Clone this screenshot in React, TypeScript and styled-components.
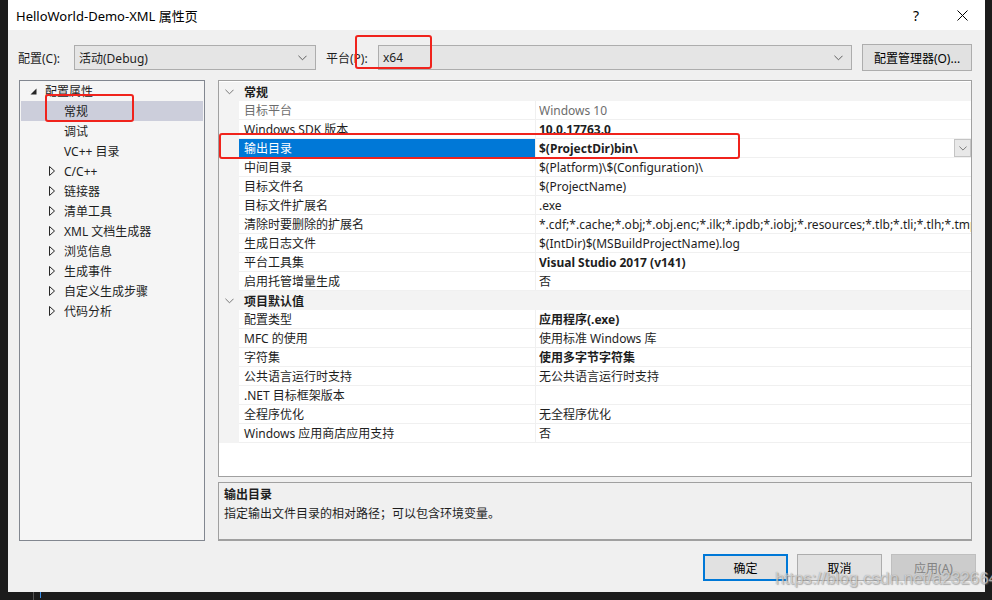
import React from "react";
import styled, { createGlobalStyle, css } from "styled-components";

const GlobalStyle = createGlobalStyle`
  html, body { margin: 0; padding: 0; background: #1c1c1c; }
  body { font-family: "Segoe UI", "Noto Sans", "Noto Sans CJK SC", sans-serif; font-size: 12px; color: #1e1e1e; }
  * { box-sizing: border-box; }
`;

const FONT = `"Segoe UI", "Noto Sans", "Noto Sans CJK SC", sans-serif`;

const Page = styled.div`
  position: relative;
  width: 992px;
  height: 600px;
  overflow: hidden;
  background: #1c1c1c;
  padding: 0 7px 0 8px;
  display: flex;
  flex-direction: column;
  font-family: ${FONT};
`;

const Dialog = styled.div`
  width: 977px;
  height: 592px;
  background: #f0f0f0;
  display: flex;
  flex-direction: column;
  overflow: hidden;
`;

const TitleBar = styled.div`
  height: 30px;
  background: #ffffff;
  display: flex;
  align-items: center;
  padding-left: 8px;
`;

const TitleText = styled.span`
  font-size: 13px;
  color: #000;
  flex: 1;
`;

const TitleButton = styled.div`
  width: 46px;
  height: 30px;
  display: flex;
  align-items: center;
  justify-content: center;
  font-size: 14px;
  color: #000;
`;

const Body = styled.div`
  flex: 1;
  min-width: 0;
  display: flex;
  flex-direction: column;
  padding: 14px 13px 11px 10px;
`;

const ConfigRow = styled.div`
  height: 27px;
  display: flex;
  align-items: center;
`;

const Label = styled.span<{ $w: number }>`
  width: ${(p) => p.$w}px;
  flex: none;
`;

const Combo = styled.div<{ $w: number }>`
  width: ${(p) => p.$w}px;
  height: 25px;
  flex: none;
  background: #e5e5e5;
  border: 1px solid #adadad;
  display: flex;
  align-items: center;
  padding: 0 8px 0 4px;
  margin-right: 10px;
  span { flex: 1; }
`;

const PushButton = styled.div<{ $variant?: "default" | "primary" | "disabled" }>`
  width: 85px;
  height: 27px;
  flex: none;
  display: flex;
  align-items: center;
  justify-content: center;
  background: #e1e1e1;
  border: 1px solid #adadad;
  color: #000;
  ${(p) =>
    p.$variant === "primary" &&
    css`
      border: 2px solid #0078d7;
    `}
  ${(p) =>
    p.$variant === "disabled" &&
    css`
      background: #cccccc;
      border-color: #bfbfbf;
      color: #838383;
    `}
`;

const WideButton = styled(PushButton)`
  width: 110px;
`;

const Main = styled.div`
  margin-top: 9px;
  margin-left: 1px;
  height: 461px;
  min-width: 0;
  display: flex;
  gap: 13px;
`;

const Tree = styled.div`
  width: 186px;
  flex: none;
  background: #f5f5f5;
  border: 1px solid #828790;
  padding: 0 1px;
`;

const TreeRow = styled.div<{ $level: number; $selected?: boolean }>`
  height: 20px;
  display: flex;
  align-items: center;
  padding-left: ${(p) => (p.$level === 0 ? 9 : 28)}px;
  background: ${(p) => (p.$selected ? "#cccedb" : "transparent")};
`;

const Expander = styled.span`
  width: 15px;
  flex: none;
  display: flex;
  align-items: center;
`;

const RightCol = styled.div`
  flex: 1;
  min-width: 0;
  display: flex;
  flex-direction: column;
  gap: 5px;
`;

const Grid = styled.div`
  height: 397px;
  background: #fff;
  border: 1px solid #a0a0a0;
  padding-top: 1px;
  overflow: hidden;
`;

const GridRow = styled.div`
  height: 19px;
  display: flex;
  min-width: 0;
`;

const Gutter = styled.div`
  width: 20px;
  flex: none;
  background: #f3f3f3;
  display: flex;
  align-items: center;
  justify-content: center;
`;

const CategoryCell = styled.div`
  flex: 1;
  background: #f3f3f3;
  font-weight: bold;
  display: flex;
  align-items: center;
  padding-left: 5px;
`;

const NameCell = styled.div<{ $selected?: boolean; $dim?: boolean }>`
  width: 297px;
  flex: none;
  display: flex;
  align-items: center;
  padding-left: 5px;
  border-right: 1px solid #f0f0f0;
  border-bottom: 1px solid #f0f0f0;
  white-space: nowrap;
  overflow: hidden;
  color: ${(p) => (p.$selected ? "#fff" : p.$dim ? "#6d6d6d" : "#1e1e1e")};
  background: ${(p) => (p.$selected ? "#0078d7" : "#fff")};
`;

const ValueCell = styled.div<{ $bold?: boolean; $dim?: boolean }>`
  flex: 1;
  min-width: 0;
  display: flex;
  align-items: center;
  padding-left: 3px;
  border-bottom: 1px solid #f0f0f0;
  white-space: nowrap;
  overflow: hidden;
  font-weight: ${(p) => (p.$bold ? "bold" : "normal")};
  color: ${(p) => (p.$dim ? "#6d6d6d" : "#1e1e1e")};
  span { flex: 1; min-width: 0; overflow: hidden; }
`;

const DropButton = styled.div`
  width: 17px;
  height: 18px;
  flex: none;
  background: #e8e8e8;
  border: 1px solid #c4c4c4;
  display: flex;
  align-items: center;
  justify-content: center;
`;

const Description = styled.div`
  height: 59px;
  background: #f0f0f0;
  border: 1px solid #a0a0a0;
  border-bottom-width: 2px;
  padding: 2px 5px;
  display: flex;
  flex-direction: column;
  line-height: 19px;
`;

const DescTitle = styled.div`
  font-weight: bold;
`;

const ButtonRow = styled.div`
  margin-top: 13px;
  margin-right: -4px;
  display: flex;
  justify-content: flex-end;
  gap: 9px;
`;

const Annotation = styled.div<{ $x: number; $y: number; $w: number; $h: number }>`
  position: absolute;
  left: ${(p) => p.$x}px;
  top: ${(p) => p.$y}px;
  width: ${(p) => p.$w}px;
  height: ${(p) => p.$h}px;
  border: 2px solid #f0231c;
  border-radius: 3px;
  pointer-events: none;
`;

const Watermark = styled.div`
  position: absolute;
  left: 775px;
  top: 569px;
  font-family: "Liberation Sans", Arial, sans-serif;
  font-size: 17px;
  color: rgba(255, 255, 255, 0.55);
  text-shadow: 0 0 1px rgba(90, 90, 90, 0.6), 1px 1px 1px rgba(120, 120, 120, 0.5);
  white-space: nowrap;
  pointer-events: none;
`;

const Taskbar = styled.div`
  height: 8px;
  display: flex;
  padding-left: 25px;
  gap: 6px;
`;

const TaskTick = styled.div<{ $color: string; $h: number }>`
  width: 1px;
  height: ${(p) => p.$h}px;
  background: ${(p) => p.$color};
`;

const Chevron = ({ size = 9, color = "#505050" }: { size?: number; color?: string }) => (
  <svg width={size} height={Math.ceil(size / 2) + 1} viewBox="0 0 10 6">
    <polyline points="0.5,0.5 5,5 9.5,0.5" fill="none" stroke={color} strokeWidth="1" />
  </svg>
);

const OpenTriangle = () => (
  <svg width="7" height="7" viewBox="0 0 7 7">
    <polygon points="6.5,0.5 6.5,6.5 0.5,6.5" fill="#262626" />
  </svg>
);

const ClosedTriangle = () => (
  <svg width="6" height="10" viewBox="0 0 6 10">
    <polygon points="0.5,0.5 5.5,5 0.5,9.5" fill="none" stroke="#262626" strokeWidth="1" />
  </svg>
);

const CloseIcon = () => (
  <svg width="11" height="11" viewBox="0 0 11 11">
    <path d="M0.5 0.5 L10.5 10.5 M10.5 0.5 L0.5 10.5" stroke="#000" strokeWidth="1" />
  </svg>
);

type Prop = { name: string; value: string; bold?: boolean; dim?: boolean; selected?: boolean };
type Section = { title: string; props: Prop[] };

const sections: Section[] = [
  {
    title: "常规",
    props: [
      { name: "目标平台", value: "Windows 10", dim: true },
      { name: "Windows SDK 版本", value: "10.0.17763.0", bold: true },
      { name: "输出目录", value: "$(ProjectDir)bin\\", bold: true, selected: true },
      { name: "中间目录", value: "$(Platform)\\$(Configuration)\\" },
      { name: "目标文件名", value: "$(ProjectName)" },
      { name: "目标文件扩展名", value: ".exe" },
      {
        name: "清除时要删除的扩展名",
        value:
          "*.cdf;*.cache;*.obj;*.obj.enc;*.ilk;*.ipdb;*.iobj;*.resources;*.tlb;*.tli;*.tlh;*.tmp;*.rsp;*.pgc;*.pgd;*.meta;*.tlog;*.manifest;*.res;*.pch;*.exp;*.idb;*.rep;*.xdc;*.pdb;*_manifest.rc;*.bsc;*.sbr;*.xml;*.metagen;*.bi",
      },
      { name: "生成日志文件", value: "$(IntDir)$(MSBuildProjectName).log" },
      { name: "平台工具集", value: "Visual Studio 2017 (v141)", bold: true },
      { name: "启用托管增量生成", value: "否" },
    ],
  },
  {
    title: "项目默认值",
    props: [
      { name: "配置类型", value: "应用程序(.exe)", bold: true },
      { name: "MFC 的使用", value: "使用标准 Windows 库" },
      { name: "字符集", value: "使用多字节字符集", bold: true },
      { name: "公共语言运行时支持", value: "无公共语言运行时支持" },
      { name: ".NET 目标框架版本", value: "" },
      { name: "全程序优化", value: "无全程序优化" },
      { name: "Windows 应用商店应用支持", value: "否" },
    ],
  },
];

const treeChildren: { label: string; expandable: boolean; selected?: boolean }[] = [
  { label: "常规", expandable: false, selected: true },
  { label: "调试", expandable: false },
  { label: "VC++ 目录", expandable: false },
  { label: "C/C++", expandable: true },
  { label: "链接器", expandable: true },
  { label: "清单工具", expandable: true },
  { label: "XML 文档生成器", expandable: true },
  { label: "浏览信息", expandable: true },
  { label: "生成事件", expandable: true },
  { label: "自定义生成步骤", expandable: true },
  { label: "代码分析", expandable: true },
];

export default function App() {
  return (
    <>
      <GlobalStyle />
      <Page>
        <Dialog>
          <TitleBar>
            <TitleText>HelloWorld-Demo-XML 属性页</TitleText>
            <TitleButton>?</TitleButton>
            <TitleButton>
              <CloseIcon />
            </TitleButton>
          </TitleBar>
          <Body>
            <ConfigRow>
              <Label $w={56}>配置(C):</Label>
              <Combo $w={242}>
                <span>活动(Debug)</span>
                <Chevron />
              </Combo>
              <Label $w={52}>平台(P):</Label>
              <Combo $w={474}>
                <span>x64</span>
                <Chevron />
              </Combo>
              <WideButton>配置管理器(O)...</WideButton>
            </ConfigRow>
            <Main>
              <Tree>
                <TreeRow $level={0}>
                  <Expander>
                    <OpenTriangle />
                  </Expander>
                  配置属性
                </TreeRow>
                {treeChildren.map((c) => (
                  <TreeRow key={c.label} $level={1} $selected={c.selected}>
                    <Expander>{c.expandable && <ClosedTriangle />}</Expander>
                    {c.label}
                  </TreeRow>
                ))}
              </Tree>
              <RightCol>
                <Grid>
                  {sections.map((s) => (
                    <React.Fragment key={s.title}>
                      <GridRow>
                        <Gutter>
                          <Chevron size={9} color="#6a6a6a" />
                        </Gutter>
                        <CategoryCell>{s.title}</CategoryCell>
                      </GridRow>
                      {s.props.map((p) => (
                        <GridRow key={p.name}>
                          <Gutter />
                          <NameCell $selected={p.selected} $dim={p.dim}>
                            {p.name}
                          </NameCell>
                          <ValueCell $bold={p.bold} $dim={p.dim}>
                            <span>{p.value}</span>
                            {p.selected && (
                              <DropButton>
                                <Chevron size={8} color="#606060" />
                              </DropButton>
                            )}
                          </ValueCell>
                        </GridRow>
                      ))}
                    </React.Fragment>
                  ))}
                </Grid>
                <Description>
                  <DescTitle>输出目录</DescTitle>
                  <div>指定输出文件目录的相对路径；可以包含环境变量。</div>
                </Description>
              </RightCol>
            </Main>
            <ButtonRow>
              <PushButton $variant="primary">确定</PushButton>
              <PushButton>取消</PushButton>
              <PushButton $variant="disabled">应用(A)</PushButton>
            </ButtonRow>
          </Body>
        </Dialog>
        <Taskbar>
          <TaskTick $color="#555" $h={8} />
          <TaskTick $color="#3a8ee6" $h={6} />
        </Taskbar>
        <Annotation $x={355} $y={35} $w={77} $h={34} />
        <Annotation $x={45} $y={94} $w={89} $h={28} />
        <Annotation $x={219} $y={133} $w={521} $h={26} />
        <Watermark>https://blog.csdn.net/a232664</Watermark>
      </Page>
    </>
  );
}
